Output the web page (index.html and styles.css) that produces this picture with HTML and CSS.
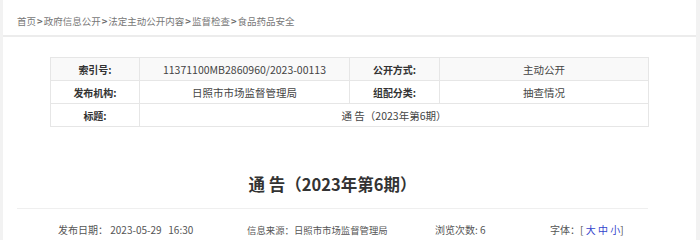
FILE: index.html
```html
<!DOCTYPE html>
<html lang="zh-CN">
<head>
<meta charset="utf-8">
<title>通 告（2023年第6期）</title>
<link rel="stylesheet" href="styles.css">
</head>
<body>
<div class="page">
  <div class="crumb">
    <a href="#">首页</a><span class="sep">&gt;</span><a href="#">政府信息公开</a><span class="sep">&gt;</span><a href="#">法定主动公开内容</a><span class="sep">&gt;</span><a href="#">监督检查</a><span class="sep">&gt;</span><a href="#">食品药品安全</a>
  </div>
  <table class="meta">
    <colgroup><col class="c1"><col class="c2"><col class="c3"><col class="c4"></colgroup>
    <tr class="odd">
      <th>索引号:</th><td>11371100MB2860960/2023-00113</td>
      <th>公开方式:</th><td>主动公开</td>
    </tr>
    <tr>
      <th>发布机构:</th><td>日照市市场监督管理局</td>
      <th>组配分类:</th><td>抽查情况</td>
    </tr>
    <tr>
      <th>标题:</th><td colspan="3">通 告（2023年第6期）</td>
    </tr>
  </table>
  <h1 class="title">通 告（2023年第6期）</h1>
  <div class="info">
    <span class="date">发布日期： 2023-05-29&nbsp;&nbsp; 16:30</span>
    <span class="src">信息来源：日照市市场监督管理局</span>
    <span class="views">浏览次数: 6</span>
    <span class="size">字体：[ <a href="#">大</a> <a href="#">中</a> <a href="#">小</a>]</span>
  </div>
</div>
</body>
</html>
```
FILE: styles.css
```css
html, body {
  margin: 0;
  padding: 0;
  background: #f2f2f2;
  font-family: "Noto Sans CJK SC", "Microsoft YaHei", sans-serif;
  font-size: 11px;
  color: #555;
}
.page {
  margin: 0 4px 0 3px;
  background: #fff;
  height: 240px;
  overflow: hidden;
}
.crumb {
  height: 37px;
  box-sizing: border-box;
  padding: 12px 0 0 14px;
  line-height: 18px;
  border-bottom: 2px solid #ececec;
  color: #777;
  font-size: 9.5px;
}
.crumb a {
  color: #777;
  text-decoration: none;
}
.crumb .sep {
  margin: 0 1px;
  font-weight: bold;
  color: #666;
}
.meta {
  width: 598px;
  margin: 20px auto 0;
  border-collapse: collapse;
  table-layout: fixed;
}
.meta .c1 { width: 89px; }
.meta .c2 { width: 210px; }
.meta .c3 { width: 90px; }
.meta .c4 { width: 209px; }
.meta th, .meta td {
  border: 1px solid #e6e6e6;
  height: 22px;
  padding: 0;
  text-align: center;
  color: #444;
}
.meta th {
  font-weight: bold;
  font-size: 10px;
  color: #333;
}
.meta td {
  font-size: 10.5px;
}
.meta tr.odd th, .meta tr.odd td {
  background: #f9f9f9;
}
.title {
  margin: 45px 48px 0 14px;
  text-align: center;
  font-size: 16.5px;
  line-height: 24px;
  font-weight: bold;
  color: #333;
  padding-bottom: 12px;
  border-bottom: 1px solid #efefef;
}
.info {
  display: flex;
  padding: 11px 0 0 55px;
  line-height: 20px;
  font-size: 10px;
  color: #555;
}
.info .date { width: 189px; }
.info .src { width: 188px; font-size: 9.4px; }
.info .views { width: 115px; }
.info .size a {
  color: #3344cc;
  text-decoration: none;
}
```
